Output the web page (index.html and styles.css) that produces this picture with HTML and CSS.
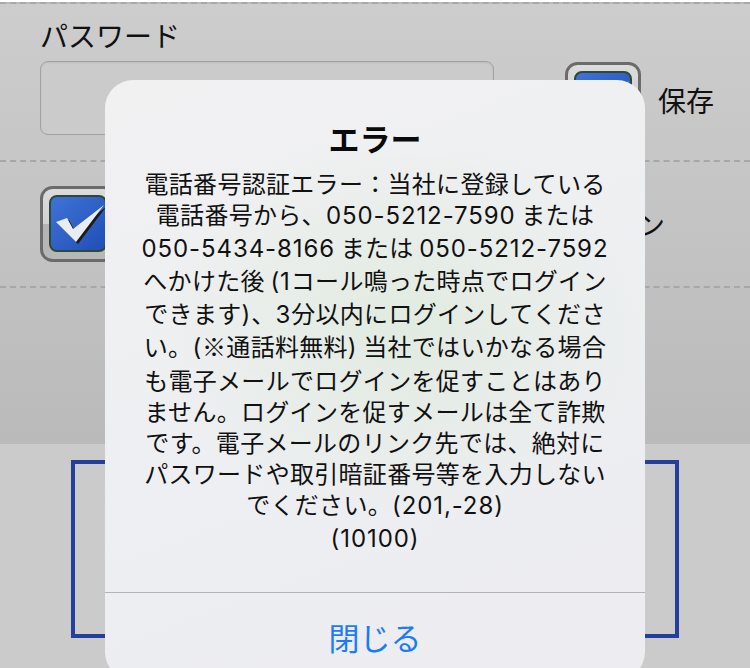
FILE: index.html
```html
<!DOCTYPE html>
<html lang="ja">
<head>
<meta charset="utf-8">
<title>エラー</title>
<link rel="stylesheet" href="styles.css">
</head>
<body>
<div class="page">
  <section class="form">
    <div class="row row-pass">
      <div class="field">
        <div class="label">パスワード</div>
        <div class="input"></div>
      </div>
      <div class="save">
        <svg class="check" viewBox="0 0 76 76" width="76" height="76" aria-hidden="true">
          <defs>
            <linearGradient id="fr1" x1="0" y1="0" x2="0" y2="1">
              <stop offset="0" stop-color="#dcdcdc"/><stop offset="0.5" stop-color="#d2d2d2"/>
              <stop offset="0.5" stop-color="#b4b4b4"/><stop offset="1" stop-color="#b8b8b8"/>
            </linearGradient>
            <linearGradient id="bl1" x1="0" y1="0" x2="1" y2="1">
              <stop offset="0" stop-color="#3f74d8"/><stop offset="1" stop-color="#1f4eb4"/>
            </linearGradient>
          </defs>
          <rect x="1.5" y="1.5" width="73" height="73" rx="11" fill="url(#fr1)" stroke="#6b6b6b" stroke-width="3"/>
          <rect x="10" y="10" width="56" height="55" rx="7" fill="url(#bl1)" stroke="#2f4a34" stroke-width="2"/>
          <path d="M18 38 L29 34 L35 45 L66 21 L38 58 Z" fill="#1b1b1b"/>
          <path d="M16 36 L27 32 L33 43 L64 19 L36 56 Z" fill="#e9ecf2"/>
        </svg>
        <span class="save-label">保存</span>
      </div>
    </div>
    <div class="row row-auto">
      <svg class="check" viewBox="0 0 76 76" width="76" height="76" aria-hidden="true">
        <defs>
          <linearGradient id="fr2" x1="0" y1="0" x2="0" y2="1">
            <stop offset="0" stop-color="#dcdcdc"/><stop offset="0.5" stop-color="#d2d2d2"/>
            <stop offset="0.5" stop-color="#b4b4b4"/><stop offset="1" stop-color="#b8b8b8"/>
          </linearGradient>
          <linearGradient id="bl2" x1="0" y1="0" x2="1" y2="1">
            <stop offset="0" stop-color="#3f74d8"/><stop offset="1" stop-color="#1f4eb4"/>
          </linearGradient>
        </defs>
        <rect x="1.5" y="1.5" width="73" height="73" rx="11" fill="url(#fr2)" stroke="#6b6b6b" stroke-width="3"/>
        <rect x="10" y="10" width="56" height="55" rx="7" fill="url(#bl2)" stroke="#2f4a34" stroke-width="2"/>
        <path d="M18 38 L29 34 L35 45 L66 21 L38 58 Z" fill="#1b1b1b"/>
        <path d="M16 36 L27 32 L33 43 L64 19 L36 56 Z" fill="#e9ecf2"/>
      </svg>
      <span class="auto-label">次回から自動ログイン</span>
    </div>
    <div class="row row-empty"></div>
  </section>
  <section class="lower">
    <div class="login-box"></div>
  </section>
</div>

<div class="alert" role="alertdialog">
  <div class="alert-body">
    <h1 class="alert-title">エラー</h1>
    <p class="alert-msg">電話番号認証エラー：当社に登録している<br>電話番号から、<span class="num">050-5212-7590</span> または<br><span class="num">050-5434-8166</span> または <span class="num">050-5212-7592</span><br>へかけた後 <span class="num">(1</span>コール鳴った時点でログイン<br>できます<span class="num">)</span>、<span class="num">3</span>分以内にログインしてくださ<br>い。<span class="num">(</span>※通話料無料<span class="num">)</span> 当社ではいかなる場合<br>も電子メールでログインを促すことはあり<br>ません。ログインを促すメールは全て詐欺<br>です。電子メールのリンク先では、絶対に<br>パスワードや取引暗証番号等を入力しない<br>でください。<span class="num">(201,-28)</span><br><span class="num">(10100)</span></p>
  </div>
  <div class="alert-actions">
    <button class="alert-btn" type="button">閉じる</button>
  </div>
</div>
</body>
</html>
```

FILE: styles.css
```css
* { box-sizing: border-box; }
html, body {
  margin: 0;
  padding: 0;
}
body {
  width: 750px;
  height: 668px;
  overflow: hidden;
  position: relative;
  font-family: "Noto Sans CJK JP", "Noto Sans", sans-serif;
  color: #111;
}
.page {
  display: flex;
  flex-direction: column;
  height: 668px;
}
.form {
  height: 442px;
  background: linear-gradient(#cdcdcd, #bababa);
  border-top: 2px dashed #a9a9a9;
  margin-top: 2px;
  display: flex;
  flex-direction: column;
}
.row {
  border-bottom: 2px dashed #a7a7a7;
  display: flex;
  align-items: center;
}
.row-pass {
  height: 158px;
  padding: 11px 0 0 40px;
  align-items: flex-start;
}
.field {
  width: 454px;
  flex: none;
}
.label {
  font-size: 28px;
  line-height: 40px;
  height: 46px;
  white-space: nowrap;
}
.input {
  height: 74px;
  border: 1.5px solid #a2a2a2;
  border-radius: 8px;
  background: #cbcbcb;
  box-shadow: inset 0 1px 2px rgba(0,0,0,0.08);
}
.save {
  display: flex;
  align-items: center;
  margin-left: 71px;
  margin-top: 47px;
  gap: 17px;
  flex: none;
}
.save-label {
  font-size: 28px;
  line-height: 40px;
  white-space: nowrap;
}
.check { flex: none; display: block; }
.row-auto {
  height: 126px;
  padding: 0 85px 0 40px;
}
.auto-label {
  flex: 1;
  text-align: right;
  font-size: 28px;
  line-height: 40px;
  white-space: nowrap;
}
.row-empty {
  flex: 1;
  border-bottom: none;
}
.lower {
  flex: 1;
  background: #cbcbcb;
  padding: 16px 71px 0 71px;
}
.login-box {
  height: 178px;
  border: 4px solid #24409a;
}

.alert {
  position: absolute;
  left: 105px;
  top: 80px;
  width: 540px;
  height: 600px;
  border-radius: 28px;
  background:
    radial-gradient(ellipse 260px 200px at 300px 250px, rgba(214,232,210,0.55), rgba(214,232,210,0) 100%),
    linear-gradient(160deg, #f1f1f2 0%, #eeeff2 50%, #ececf1 100%);
  display: flex;
  flex-direction: column;
  overflow: hidden;
}
.alert-body {
  height: 512px;
  padding-top: 38px;
  text-align: center;
}
.alert-title {
  margin: 0;
  font-size: 31px;
  font-weight: 700;
  line-height: 40px;
  height: 49px;
  color: #0a0a0a;
}
.alert-msg {
  margin: 0;
  font-size: 24px;
  line-height: 31.1px;
  letter-spacing: 0.3px;
  white-space: nowrap;
  color: #111;
}
.num {
  font-family: "Inter", "Noto Sans CJK JP", sans-serif;
  letter-spacing: 0.9px;
}
.alert-actions {
  border-top: 1.5px solid #b3b3b8;
  height: 88px;
  display: flex;
}
.alert-btn {
  flex: 1;
  border: none;
  background: transparent;
  font-family: "Noto Sans CJK JP", sans-serif;
  font-size: 31px;
  color: #1a7cf6;
  padding: 0;
  height: 88px;
  line-height: 88px;
}
```
